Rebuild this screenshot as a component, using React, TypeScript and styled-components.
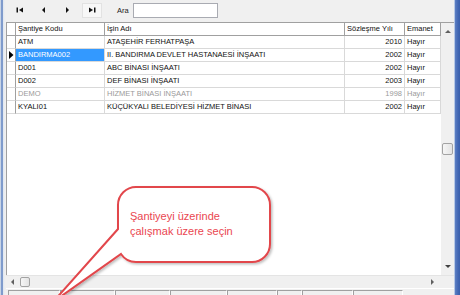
import React from "react";
import styled, { createGlobalStyle } from "styled-components";

const GlobalStyle = createGlobalStyle`
	html, body {
		margin: 0;
		padding: 0;
		width: 460px;
		height: 295px;
		overflow: hidden;
		background: #f0f0f0;
	}
	body {
		font-family: "Liberation Sans", Arial, sans-serif;
	}
`;

interface IRow {
	code: string;
	name: string;
	year: number;
	emanet: string;
	selected?: boolean;
	muted?: boolean;
}

const rows: IRow[] = [
	{ code: "ATM", name: "ATAŞEHİR FERHATPAŞA", year: 2010, emanet: "Hayır" },
	{
		code: "BANDIRMA002",
		name: "II. BANDIRMA DEVLET HASTANAESİ İNŞAATI",
		year: 2002,
		emanet: "Hayır",
		selected: true
	},
	{ code: "D001", name: "ABC BİNASI İNŞAATI", year: 2002, emanet: "Hayır" },
	{ code: "D002", name: "DEF BİNASI İNŞAATI", year: 2003, emanet: "Hayır" },
	{
		code: "DEMO",
		name: "HİZMET BİNASI İNŞAATI",
		year: 1998,
		emanet: "Hayır",
		muted: true
	},
	{
		code: "KYALI01",
		name: "KÜÇÜKYALI BELEDİYESİ HİZMET BİNASI",
		year: 2002,
		emanet: "Hayır"
	}
];

const COLS = "9px 89px 240px 60px 36px";

const Window = styled.div`
	position: relative;
	display: flex;
	width: 460px;
	height: 295px;
	overflow: hidden;
	background: #f0f0f0;
`;

const LeftFrame = styled.div`
	width: 6px;
	flex-shrink: 0;
	background: linear-gradient(
		to right,
		#c9d5e6 0,
		#c9d5e6 1px,
		#7f9bcc 1px,
		#7f9bcc 3px,
		#dfe6ef 3px,
		#f0f0f0 5px
	);
`;

const RightFrame = styled.div`
	width: 6px;
	flex-shrink: 0;
	background: linear-gradient(
		to right,
		#b7c9e6 0,
		#b7c9e6 1px,
		#5d80c4 1px,
		#4368b4 4px,
		#3a5fac 6px
	);
`;

/* the status bar runs past the bottom edge of the shot, so the column is taller than the window */
const Content = styled.div`
	flex: 1;
	display: flex;
	flex-direction: column;
	min-width: 0;
	height: calc(100% + 14px);
`;

const Toolbar = styled.div`
	height: 22px;
	flex-shrink: 0;
	display: flex;
	align-items: center;
	padding-left: 4px;
	box-sizing: border-box;
	padding-bottom: 2px;
`;

const NavButton = styled.div<{ $hot?: boolean }>`
	width: 20px;
	height: 15px;
	margin-right: 4px;
	display: flex;
	align-items: center;
	justify-content: center;
	box-sizing: border-box;
	border: 1px solid ${(p) => (p.$hot ? "#e2e2e2" : "transparent")};
	background: ${(p) => (p.$hot ? "#f7f7f7" : "transparent")};
`;

const SearchLabel = styled.span`
	font-size: 7.5px;
	color: #222;
	margin-left: 11px;
	margin-right: 4px;
`;

const SearchInput = styled.div`
	width: 85px;
	height: 15px;
	box-sizing: border-box;
	background: #fff;
	border: 1px solid #a9abb2;
`;

const GridArea = styled.div`
	flex: 1;
	display: flex;
	min-height: 0;
`;

const Table = styled.div`
	flex: 1;
	background: #fff;
	border-top: 1px solid #a0a0a0;
	border-left: 1px solid #a0a0a0;
	overflow: hidden;
`;

const HeaderRow = styled.div`
	display: grid;
	grid-template-columns: ${COLS};
	height: 13px;
`;

const HeaderCell = styled.div`
	box-sizing: border-box;
	border-right: 1px solid #a0a0a0;
	border-bottom: 1px solid #a0a0a0;
	font-size: 7.5px;
	line-height: 12px;
	padding-left: 2px;
	color: #111;
	white-space: nowrap;
	overflow: hidden;
`;

const DataRow = styled.div`
	display: grid;
	grid-template-columns: ${COLS};
	height: 13px;
`;

const Cell = styled.div<{ $right?: boolean; $selected?: boolean; $muted?: boolean }>`
	box-sizing: border-box;
	border-right: 1px solid #d9d9d9;
	border-bottom: 1px solid #d9d9d9;
	font-size: 7.5px;
	line-height: 12px;
	padding: 0 2px 0 2px;
	text-align: ${(p) => (p.$right ? "right" : "left")};
	background: ${(p) => (p.$selected ? "#3399ff" : "transparent")};
	color: ${(p) => (p.$selected ? "#fff" : p.$muted ? "#9a9a9a" : "#111")};
	white-space: nowrap;
	overflow: hidden;
`;

const IndicatorCell = styled.div`
	box-sizing: border-box;
	border-right: 1px solid #a0a0a0;
	border-bottom: 1px solid #d9d9d9;
	display: flex;
	align-items: center;
	justify-content: center;
	background: #fff;
`;

const VScroll = styled.div`
	width: 13px;
	flex-shrink: 0;
	display: flex;
	flex-direction: column;
	align-items: center;
	justify-content: space-between;
	background: #f0f0f0;
	border-top: 1px solid #a0a0a0;
	box-sizing: border-box;
	padding: 6px 0 5px;
`;

const VTrack = styled.div`
	flex: 1;
	display: flex;
	align-items: center;
	padding-bottom: 2px;
`;

const Thumb = styled.div<{ $w: number; $h: number }>`
	width: ${(p) => p.$w}px;
	height: ${(p) => p.$h}px;
	box-sizing: border-box;
	border: 1px solid #a3a3a3;
	border-radius: 2px;
	background: linear-gradient(to right, #f6f6f6, #e3e3e3);
`;

const HScroll = styled.div`
	height: 12px;
	flex-shrink: 0;
	display: flex;
	border-top: 1px solid #e4e4e4;
`;

const HTrack = styled.div`
	flex: 1;
	display: flex;
	align-items: center;
	padding: 0 5px 0 4px;
	gap: 4px;
`;

const Spacer = styled.div`
	flex: 1;
`;

const Corner = styled.div`
	width: 13px;
	flex-shrink: 0;
	background: #f0f0f0;
`;

const StatusBar = styled.div`
	height: 20px;
	flex-shrink: 0;
	display: flex;
	padding-left: 2px;
	border-top: 1px solid #fff;
`;

const StatusPanel = styled.div<{ $w: number }>`
	width: ${(p) => p.$w}px;
	height: 18px;
	margin-top: 1px;
	box-sizing: border-box;
	border-top: 1px solid #a0a0a0;
	border-left: 1px solid #a0a0a0;
	border-right: 1px solid #fff;
`;

const Callout = styled.div`
	position: absolute;
	left: 50px;
	top: 184px;
	width: 226px;
	height: 115px;
`;

const CalloutText = styled.div`
	position: absolute;
	left: 80px;
	top: 25px;
	font-size: 11px;
	line-height: 15px;
	color: #ea4650;
	white-space: nowrap;
`;

const Tri: React.FC<{ dir: "l" | "r" | "u" | "d"; color?: string }> = ({
	dir,
	color = "#111"
}) => {
	const pts = {
		l: "4,0 4,6 1,3",
		r: "1,0 1,6 4,3",
		u: "0,4 6,4 3,1",
		d: "0,1 6,1 3,4"
	}[dir];
	return (
		<svg width="6" height="6" viewBox="0 0 6 6">
			<polygon points={pts} fill={color} />
		</svg>
	);
};

const FirstIcon = () => (
	<svg width="8" height="6" viewBox="0 0 8 6">
		<rect x="0.5" y="0.5" width="1.5" height="5" fill="#111" />
		<polygon points="7,0.5 7,5.5 3,3" fill="#111" />
	</svg>
);

const LastIcon = () => (
	<svg width="8" height="6" viewBox="0 0 8 6">
		<polygon points="1,0.5 1,5.5 5,3" fill="#111" />
		<rect x="6" y="0.5" width="1.5" height="5" fill="#111" />
	</svg>
);

const headers = ["", "Şantiye Kodu", "İşin Adı", "Sözleşme Yılı", "Emanet"];

export default function App() {
	return (
		<>
			<GlobalStyle />
			<Window>
				<LeftFrame />
				<Content>
					<Toolbar>
						<NavButton>
							<FirstIcon />
						</NavButton>
						<NavButton>
							<Tri dir="l" />
						</NavButton>
						<NavButton>
							<Tri dir="r" />
						</NavButton>
						<NavButton $hot>
							<LastIcon />
						</NavButton>
						<SearchLabel>Ara</SearchLabel>
						<SearchInput />
					</Toolbar>
					<GridArea>
						<Table>
							<HeaderRow>
								{headers.map((h, i) => (
									<HeaderCell key={i}>{h}</HeaderCell>
								))}
							</HeaderRow>
							{rows.map((r) => (
								<DataRow key={r.code}>
									<IndicatorCell>
										{r.selected && (
											<svg width="5" height="8" viewBox="0 0 5 8">
												<polygon points="0,0 0,8 4.5,4" fill="#000" />
											</svg>
										)}
									</IndicatorCell>
									<Cell $selected={r.selected} $muted={r.muted}>
										{r.code}
									</Cell>
									<Cell $muted={r.muted}>{r.name}</Cell>
									<Cell $right $muted={r.muted}>
										{r.year}
									</Cell>
									<Cell $muted={r.muted}>{r.emanet}</Cell>
								</DataRow>
							))}
						</Table>
						<VScroll>
							<Tri dir="u" color="#606060" />
							<VTrack>
								<Thumb $w={11} $h={12} />
							</VTrack>
							<Tri dir="d" color="#404040" />
						</VScroll>
					</GridArea>
					<HScroll>
						<HTrack>
							<Tri dir="l" color="#606060" />
							<Thumb $w={10} $h={10} />
							<Spacer />
							<Tri dir="r" color="#606060" />
						</HTrack>
						<Corner />
					</HScroll>
					<StatusBar>
						<StatusPanel $w={52} />
						<StatusPanel $w={55} />
						<StatusPanel $w={55} />
						<StatusPanel $w={57} />
						<StatusPanel $w={50} />
						<StatusPanel $w={25} />
						<StatusPanel $w={51} />
						<StatusPanel $w={50} />
					</StatusBar>
				</Content>
				<RightFrame />
				<Callout>
					<svg width="226" height="115" viewBox="50 184 226 115">
						<defs>
							<filter id="sh" x="-10%" y="-10%" width="130%" height="130%">
								<feDropShadow dx="1.5" dy="1.5" stdDeviation="1.2" floodColor="#000" floodOpacity="0.25" />
							</filter>
						</defs>
						<path
							d="M136,187 H252 A18,18 0 0 1 270,205 V244 A18,18 0 0 1 252,262 H136 A18,18 0 0 1 121,254 L53,302 L118,229 V205 A18,18 0 0 1 136,187 Z"
							fill="#fff"
							stroke="#e2464b"
							strokeWidth="2"
							filter="url(#sh)"
						/>
					</svg>
					<CalloutText>
						Şantiyeyi üzerinde
						<br />
						çalışmak üzere seçin
					</CalloutText>
				</Callout>
			</Window>
		</>
	);
}
